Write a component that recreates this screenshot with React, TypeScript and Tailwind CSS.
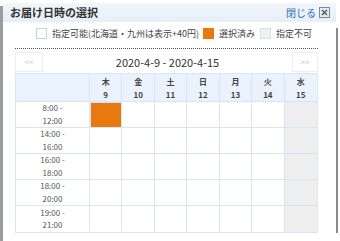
import React from "react";

const days = [
  { w: "木", d: 9 },
  { w: "金", d: 10 },
  { w: "土", d: 11 },
  { w: "日", d: 12 },
  { w: "月", d: 13 },
  { w: "火", d: 14 },
  { w: "水", d: 15 },
];
const times = [
  ["8:00 -", "12:00"],
  ["14:00 -", "16:00"],
  ["16:00 -", "18:00"],
  ["18:00 -", "20:00"],
  ["19:00 -", "21:00"],
];

export default function App() {
  const font = { fontFamily: '"Noto Sans CJK JP", "Noto Sans", sans-serif' };
  return (
    <div className="w-[340px] h-[241px] bg-white overflow-hidden relative" style={font}>
      <div className="absolute left-0 top-[6px] w-[3px] h-[235px] bg-[#9c9c9c]" />
      <div className="absolute left-[336px] top-[28px] w-[2px] h-[205px] bg-[#8a8a8a]" />
      <div className="ml-[3px] mt-[3px] w-[333px] h-[238px] bg-white flex flex-col">
        <div className="h-[19px] flex items-center justify-between pl-[7px] pr-[6px] bg-gradient-to-b from-[#f2f6fb] to-[#e6eef8] rounded-tl-[3px]">
          <span className="text-[11px] font-bold text-[#333] leading-none">お届け日時の選択</span>
          <div className="flex items-center gap-[3px]">
            <span className="text-[10px] text-[#2a6fb8] leading-none">閉じる</span>
            <span className="w-[11px] h-[11px] border border-[#7c8a96] bg-[#e6ebef] flex items-center justify-center">
              <svg width="7" height="7" viewBox="0 0 7 7">
                <path d="M1 1L6 6M6 1L1 6" stroke="#4a5560" strokeWidth="1.4" />
              </svg>
            </span>
          </div>
        </div>
        <div className="px-[12px] pt-[4px]">
          <div className="flex items-center h-[14px] text-[9px] text-[#444] leading-none pl-[21px] whitespace-nowrap">
            <span className="shrink-0 w-[11px] h-[11px] border border-[#bcd3ea] bg-white mr-[5px]" />
            <span>指定可能(北海道・九州は表示+40円)</span>
            <span className="shrink-0 w-[11px] h-[11px] bg-[#e8790f] ml-[4px] mr-[5px]" />
            <span>選択済み</span>
            <span className="shrink-0 w-[11px] h-[11px] border border-[#d8e2ea] bg-[#eef1f3] ml-[5px] mr-[5px]" />
            <span>指定不可</span>
          </div>
          <div className="mt-[8px] border-t border-dotted border-[#555] w-[303px]" />
          <div className="w-[303px] h-[22px] mt-[2px] flex items-center justify-between">
            <span className="w-[28px] h-[20px] border border-[#eeeeee] text-[8px] text-[#bbb] flex items-center justify-center">&lt;&lt;</span>
            <span className="text-[11px] text-[#333]">2020-4-9 - 2020-4-15</span>
            <span className="w-[26px] h-[20px] border border-[#eeeeee] text-[8px] text-[#bbb] flex items-center justify-center">&gt;&gt;</span>
          </div>
          <div className="w-[303px] grid grid-cols-[74px_repeat(7,1fr)] border border-[#d6e6f7]">
            <div className="h-[28px] bg-[#eaf3fd] border-r border-b border-[#d6e6f7]" />
            {days.map((d, i) => (
              <div
                key={d.d}
                className={`h-[28px] bg-[#eaf3fd] border-b border-[#d6e6f7] flex flex-col items-center justify-center text-[8px] font-bold text-[#444] leading-[13px] ${i < 6 ? "border-r" : ""}`}
              >
                <span>{d.w}</span>
                <span>{d.d}</span>
              </div>
            ))}
            {times.map((t, r) => (
              <React.Fragment key={r}>
                <div
                  className={`h-[26px] border-r border-[#d6e6f7] flex flex-col items-center justify-center text-[8px] text-[#555] leading-[12.5px] ${r < 4 ? "border-b" : ""}`}
                >
                  <span>{t[0]}</span>
                  <span>{t[1]}</span>
                </div>
                {days.map((d, i) => {
                  const sel = r === 0 && i === 0;
                  const dis = i === 6;
                  return (
                    <div
                      key={d.d}
                      className={`h-[26px] border-[#d6e6f7] ${i < 6 ? "border-r" : ""} ${r < 4 ? "border-b" : ""} ${sel ? "bg-[#e8790f] border border-[#d0a070]" : dis ? "bg-[#eeeeee]" : "bg-white"}`}
                    />
                  );
                })}
              </React.Fragment>
            ))}
          </div>
        </div>
      </div>
    </div>
  );
}
